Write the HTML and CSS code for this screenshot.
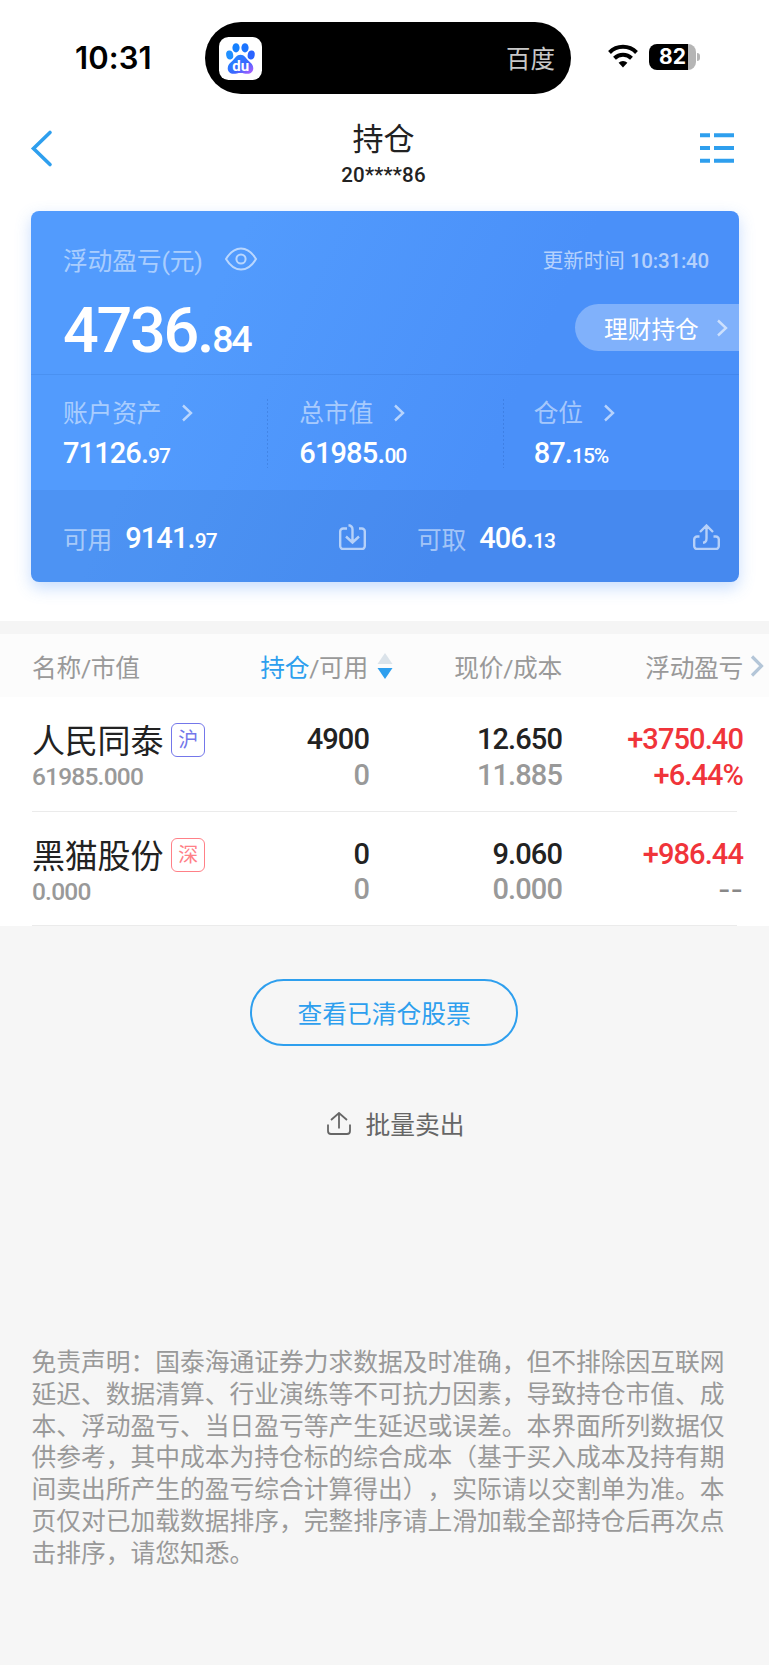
FILE: index.html
```
<!DOCTYPE html>
<html lang="zh-CN">
<head>
  <meta charset="utf-8">
  <title>持仓</title>
  <meta name="viewport" content="width=device-width, initial-scale=1">
  <link rel="stylesheet" href="styles.css">
</head>
<body>
<div class="top">
  <div class="status">
    <span class="time">10:31</span>
    <div class="island">
      <svg class="app" width="43" height="43" viewBox="0 0 43 43">
        <defs>
          <linearGradient id="paw" x1="0" y1="0" x2="1" y2="1">
            <stop offset="0" stop-color="#1a90ff"/>
            <stop offset=".6" stop-color="#3b66ff"/>
            <stop offset="1" stop-color="#c05cff"/>
          </linearGradient>
        </defs>
        <rect width="43" height="43" rx="9.5" fill="#fff"/>
        <ellipse cx="17" cy="10.8" rx="3.6" ry="4.6" fill="#1580ff"/>
        <ellipse cx="26" cy="10.8" rx="3.6" ry="4.6" fill="#1b74ff"/>
        <ellipse cx="10.7" cy="18" rx="3.5" ry="4.5" transform="rotate(-12 10.7 18)" fill="#2090ff"/>
        <ellipse cx="32.2" cy="18" rx="3.5" ry="4.5" transform="rotate(12 32.2 18)" fill="#2a63ff"/>
        <path d="M21.5 17.8c4 0 5.300 3.600 8 6 2.600 2.400 4.800 4 4.800 7.400 0 3.400-2.500 5.600-5.800 5.600-2.600 0-4.200-.8-7-.8s-4.400.8-7 .8c-3.300 0-5.800-2.200-5.800-5.600 0-3.400 2.200-5 4.800-7.400 2.700-2.400 4-6 8-6z" fill="url(#paw)"/>
        <text class="du" x="21.700" y="33.700" text-anchor="middle">du</text>
      </svg>
      <span>百度</span>
    </div>
    <svg class="wifi" width="32" height="25" viewBox="0 0 32 25">
      <path d="M2.500 8.500a19 19 0 0 1 27 0" fill="none" stroke="#000" stroke-width="4"/>
      <path d="M7.500 14.200a12.200 12.200 0 0 1 17 0" fill="none" stroke="#000" stroke-width="4"/>
      <path d="M11.600 18.700a6.300 6.300 0 0 1 8.800 0L16 23.400z"/>
    </svg>
    <div class="battery"><span>82</span></div>
  </div>
  <div class="nav">
    <svg width="24" height="40" viewBox="0 0 24 40"><path d="M20 4.500 3.500 20.500l16.500 16" fill="none" stroke="#2e9fee" stroke-width="3.600" stroke-linecap="round"/></svg>
    <div class="title">
      <h1>持仓</h1>
      <p>20****86</p>
    </div>
    <svg width="34" height="30" viewBox="0 0 34 30" fill="#2e9fee"><path d="M0 .3h10v4H0zM14 .3h20v4H14zM0 13h10v4H0zM14 13h20v4H14zM0 25.700h10v4H0zM14 25.700h20v4H14z"/></svg>
  </div>
  <div class="card">
    <div class="profit">
      <div class="line">
        <span class="label">浮动盈亏(元)</span>
        <svg class="eye" width="32" height="24" viewBox="0 0 32 24"><path d="M1 12C5 5.300 10 1.500 16 1.500S27 5.300 31 12c-4 6.700-9 10.500-15 10.500S5 18.700 1 12z"/><circle cx="16" cy="12" r="4.600"/></svg>
        <span class="update">更新时间 <span>10:31:40</span></span>
      </div>
      <div class="line">
        <span class="big">4736.<small>84</small></span>
        <a class="pill">理财持仓<svg width="12" height="18" viewBox="0 0 12 18"><path d="m2 1.500 8 7.500-8 7.500"/></svg></a>
      </div>
    </div>
    <div class="assets">
      <div>
        <p class="label">账户资产<svg width="12" height="18" viewBox="0 0 12 18"><path d="m2 1.500 8 7.500-8 7.500"/></svg></p>
        <p class="num">71126.<small>97</small></p>
      </div>
      <div>
        <p class="label">总市值<svg width="12" height="18" viewBox="0 0 12 18"><path d="m2 1.500 8 7.500-8 7.500"/></svg></p>
        <p class="num">61985.<small>00</small></p>
      </div>
      <div>
        <p class="label">仓位<svg width="12" height="18" viewBox="0 0 12 18"><path d="m2 1.500 8 7.500-8 7.500"/></svg></p>
        <p class="num">87.<small>15%</small></p>
      </div>
    </div>
    <div class="cash">
      <div>
        <span class="label">可用</span><span class="num">9141.<small>97</small></span>
        <svg width="27" height="26" viewBox="0 0 27 26"><path d="M8 4.500H4.200a3 3 0 0 0-3 3V22a3 3 0 0 0 3 3h18.600a3 3 0 0 0 3-3V7.500a3 3 0 0 0-3-3H20M9.500 1.200c3 .3 4 2 4 4.300v13M7 12.500l6.500 6 6.500-6"/></svg>
      </div>
      <div>
        <span class="label">可取</span><span class="num">406.<small>13</small></span>
        <svg width="27" height="26" viewBox="0 0 27 26"><path d="M6.500 12.500H4.200a3 3 0 0 0-3 3V22a3 3 0 0 0 3 3h18.600a3 3 0 0 0 3-3v-6.500a3 3 0 0 0-3-3h-2.300M10 18.800c2.600-.3 3.500-1.800 3.500-4.300V1.500M7 8l6.500-6.500L20 8"/></svg>
      </div>
    </div>
  </div>
</div>

<div class="head row">
  <span class="name">名称/市值</span>
  <span class="sorted"><b>持仓</b>/可用</span>
  <svg class="sort" width="16" height="26" viewBox="0 0 16 26"><path d="M8 0l7.500 11H.5z" fill="#dbe3ea"/><path d="M8 26l7.500-11H.5z" fill="#2e9fee"/></svg>
  <span class="price">现价/成本</span>
  <span class="gain">浮动盈亏</span>
  <svg class="more" width="14" height="22" viewBox="0 0 14 22"><path d="m2 1.500 9.500 9.500L2 20.500" fill="none" stroke="#b4c6d8" stroke-width="3.200"/></svg>
</div>
<div class="list">
  <div class="row stock">
    <div class="name">
      <p class="stockname">人民同泰<i class="tag sh">沪</i></p>
      <p class="value">61985.000</p>
    </div>
    <div class="hold"><p>4900</p><p class="sub">0</p></div>
    <div class="price"><p>12.650</p><p class="sub">11.885</p></div>
    <div class="gain red"><p>+3750.40</p><p>+6.44%</p></div>
  </div>
  <div class="row stock">
    <div class="name">
      <p class="stockname">黑猫股份<i class="tag sz">深</i></p>
      <p class="value">0.000</p>
    </div>
    <div class="hold"><p>0</p><p class="sub">0</p></div>
    <div class="price"><p>9.060</p><p class="sub">0.000</p></div>
    <div class="gain red"><p>+986.44</p><p class="none">--</p></div>
  </div>
</div>

<div class="actions">
  <button class="cleared">查看已清仓股票</button>
  <a class="batch">
    <svg width="24" height="23" viewBox="0 0 24 23"><path d="M1 12.500V19a3 3 0 0 0 3 3h16a3 3 0 0 0 3-3v-6.500M12 16.500V1M4 8l8-7 8 7" fill="none" stroke="#666" stroke-width="1.800"/></svg>批量卖出</a>
</div>
<p class="disclaimer">免责声明：国泰海通证券力求数据及时准确，但不排除因互联网<br>延迟、数据清算、行业演练等不可抗力因素，导致持仓市值、成<br>本、浮动盈亏、当日盈亏等产生延迟或误差。本界面所列数据仅<br>供参考，其中成本为持仓标的综合成本（基于买入成本及持有期<br>间卖出所产生的盈亏综合计算得出），实际请以交割单为准。本<br>页仅对已加载数据排序，完整排序请上滑加载全部持仓后再次点<br>击排序，请您知悉。</p>
</body>
</html>
```
FILE: styles.css
```
html, body {
  margin: 0;
  background: #f6f6f6;
  color: #222;
  font-family: Roboto, "Noto Sans CJK SC", sans-serif;
  font-size: 24.75px;
}
body {
  height: 1665px;
  overflow: hidden;
}
* {
  box-sizing: border-box;
}
p, h1 {
  margin: 0;
  font-weight: 400;
}
svg {
  flex: none;
}
.top {
  height: 621px;
  background: #fff;
}

/* status bar */
.status {
  display: flex;
  align-items: center;
  height: 116px;
}
.time {
  width: 205px;
  padding-left: 75px;
  font: 600 31px/40px Inter, sans-serif;
  letter-spacing: 0.1px;
  color: #000;
}
.island {
  display: flex;
  align-items: center;
  justify-content: space-between;
  width: 366px;
  height: 72px;
  padding: 0 16px 0 14px;
  border-radius: 36px;
  background: #000;
  color: #c8c8c8;
  font-size: 24.5px;
}
.island span {
  margin-top: -1px;
}
.du {
  fill: #fff;
  font: 700 15px Roboto, sans-serif;
}
.wifi {
  margin: -3px 0 0 36px;
}
.battery {
  position: relative;
  display: flex;
  align-items: center;
  justify-content: center;
  width: 47px;
  height: 26px;
  margin: -2px 0 0 10px;
  border-radius: 8px;
  background: linear-gradient(90deg, #000 39px, #b5b5b5 39px);
  color: #fff;
  font: 700 21px/26px Inter, sans-serif;
}
.battery::after {
  content: "";
  position: absolute;
  right: -4px;
  top: 9px;
  width: 3px;
  height: 8px;
  border-radius: 0 4px 4px 0;
  background: #b5b5b5;
}

/* title bar */
.nav {
  display: flex;
  justify-content: space-between;
  height: 95px;
  padding: 12px 35px 0 30px;
}
.nav > svg:last-child {
  margin-top: 5px;
}
.title {
  margin-top: -6px;
  padding-left: 13px;
  text-align: center;
}
.title h1 {
  font-size: 31px;
  line-height: 36px;
}
.title p {
  font-size: 20.5px;
  font-weight: 500;
  line-height: 35px;
  letter-spacing: 0.2px;
}

/* account card */
.card {
  width: 708px;
  height: 371px;
  margin-left: 31px;
  border-radius: 8px;
  background: linear-gradient(115deg, #529bfd 25%, #4a90f9 65%);
  box-shadow: 0 6px 16px rgba(74, 144, 249, .3);
  color: #fff;
  overflow: hidden;
}
.card svg {
  fill: none;
  stroke: rgba(255, 255, 255, .6);
  stroke-width: 2.4;
}
.label {
  color: rgba(255, 255, 255, .52);
  letter-spacing: -0.15px;
}
.line {
  display: flex;
  align-items: center;
}
.profit {
  height: 164px;
  padding-left: 32px;
  border-bottom: 1px solid rgba(0, 40, 120, .09);
}
.profit .line:first-child {
  height: 96px;
}
.profit .line:last-child {
  height: 42px;
}
.card .eye {
  margin-left: 22px;
  stroke-width: 2;
}
.update {
  margin-left: auto;
  padding-right: 30px;
  color: rgba(255, 255, 255, .6);
  font-size: 20.5px;
}
.update span {
  font-weight: 500;
  letter-spacing: -0.2px;
}
.big {
  margin-top: 14px;
  font-size: 63px;
  font-weight: 500;
  line-height: 42px;
  letter-spacing: -2.3px;
}
.big small {
  font-size: 37.5px;
  letter-spacing: -2.3px;
}
.pill {
  display: flex;
  align-items: center;
  width: 164px;
  height: 47px;
  margin: -1px 0 0 auto;
  padding-left: 29px;
  border-radius: 24px 0 0 24px;
  background: rgba(255, 255, 255, .3);
  font-size: 23.7px;
}
.pill svg {
  margin-left: 17px;
}
.assets {
  display: flex;
  height: 115px;
}
.assets > div {
  width: 236px;
  padding: 23px 0 0 31px;
}
.assets > div:first-child {
  width: 238px;
  padding-left: 32px;
}
.assets > div:last-child {
  padding-left: 30px;
}
.assets > div:not(:last-child) {
  background: repeating-linear-gradient(rgba(0, 40, 120, .16) 0 2px, transparent 2px 4px) right 24px / 1px 69px no-repeat;
}
.assets p {
  line-height: 32px;
}
.assets svg {
  margin-left: 20px;
}
.assets p.num {
  margin-top: 7px;
}
.num {
  font-size: 29px;
  font-weight: 500;
  letter-spacing: -0.9px;
}
.num small {
  font-size: 21px;
  letter-spacing: -1px;
}
.cash {
  display: flex;
  height: 92px;
  background: rgba(30, 70, 130, .08);
}
.cash > div {
  display: flex;
  align-items: center;
  width: 335px;
  padding: 3px 0 0 32px;
}
.cash > div + div {
  width: 373px;
  padding-left: 51px;
}
.cash .num {
  margin: 1px 0 0 13px;
}
.cash svg {
  margin: -2px 0 0 auto;
}
.cash > div + div svg {
  margin-right: 19px;
}

/* positions table */
.row {
  display: grid;
  grid-template-columns: 200px 137px 26px 167px 181px 26px;
  padding-left: 32px;
}
.head {
  align-items: center;
  height: 76px;
  border-top: 13px solid #f5f5f5;
  background: #fcfcfc;
  color: #999;
}
.head span {
  letter-spacing: -0.3px;
}
.head .sorted {
  padding-right: 1px;
}
.head b {
  color: #2e9fee;
  font-weight: 400;
}
.sorted, .price, .gain, .hold {
  text-align: right;
}
.sort {
  margin-left: 8px;
}
.more {
  margin-left: 7px;
}
.list {
  background: #fff;
}
.stock {
  position: relative;
  height: 114.5px;
  padding-top: 25px;
  font-size: 29px;
  letter-spacing: -0.9px;
  line-height: 35.5px;
}
.stock p {
  font-weight: 500;
}
.stock::after {
  content: "";
  position: absolute;
  left: 32px;
  right: 32px;
  bottom: 0;
  height: 1px;
  background: #ebebeb;
}
.stock .price {
  grid-column: 4;
}
.stock p.stockname {
  display: flex;
  align-items: center;
  height: 38px;
  padding-top: 2px;
  font-size: 33px;
  font-weight: 400;
  letter-spacing: -0.2px;
}
.tag {
  width: 34px;
  height: 34px;
  margin: -4px 0 0 8px;
  border: 1.5px solid;
  border-radius: 6px;
  font-size: 20px;
  font-style: normal;
  line-height: 33px;
  text-align: center;
}
.sh {
  color: #7477ea;
}
.sz {
  color: #ff8087;
}
.value {
  color: #999;
  font-size: 24.5px;
  line-height: 34px;
  letter-spacing: -0.8px;
}
.sub {
  color: #999;
}
.red {
  color: #f0343a;
}
.none {
  color: #888;
  font-family: Inter, sans-serif;
  font-size: 27px;
  letter-spacing: 0;
}

/* buttons */
.actions {
  display: flex;
  flex-direction: column;
  align-items: center;
  height: 421px;
  padding-top: 53px;
}
.cleared {
  width: 268px;
  height: 67px;
  margin-right: 1px;
  padding-bottom: 2px;
  border: 2px solid #2e9fee;
  border-radius: 34px;
  background: none;
  color: #2e9fee;
  font: inherit;
}
.batch {
  display: flex;
  align-items: center;
  gap: 15px;
  margin: 59px 0 0 22px;
  color: #666;
}
.disclaimer {
  padding-left: 31.5px;
  color: #999;
  line-height: 31.83px;
  white-space: nowrap;
  text-spacing-trim: space-all;
}
```
